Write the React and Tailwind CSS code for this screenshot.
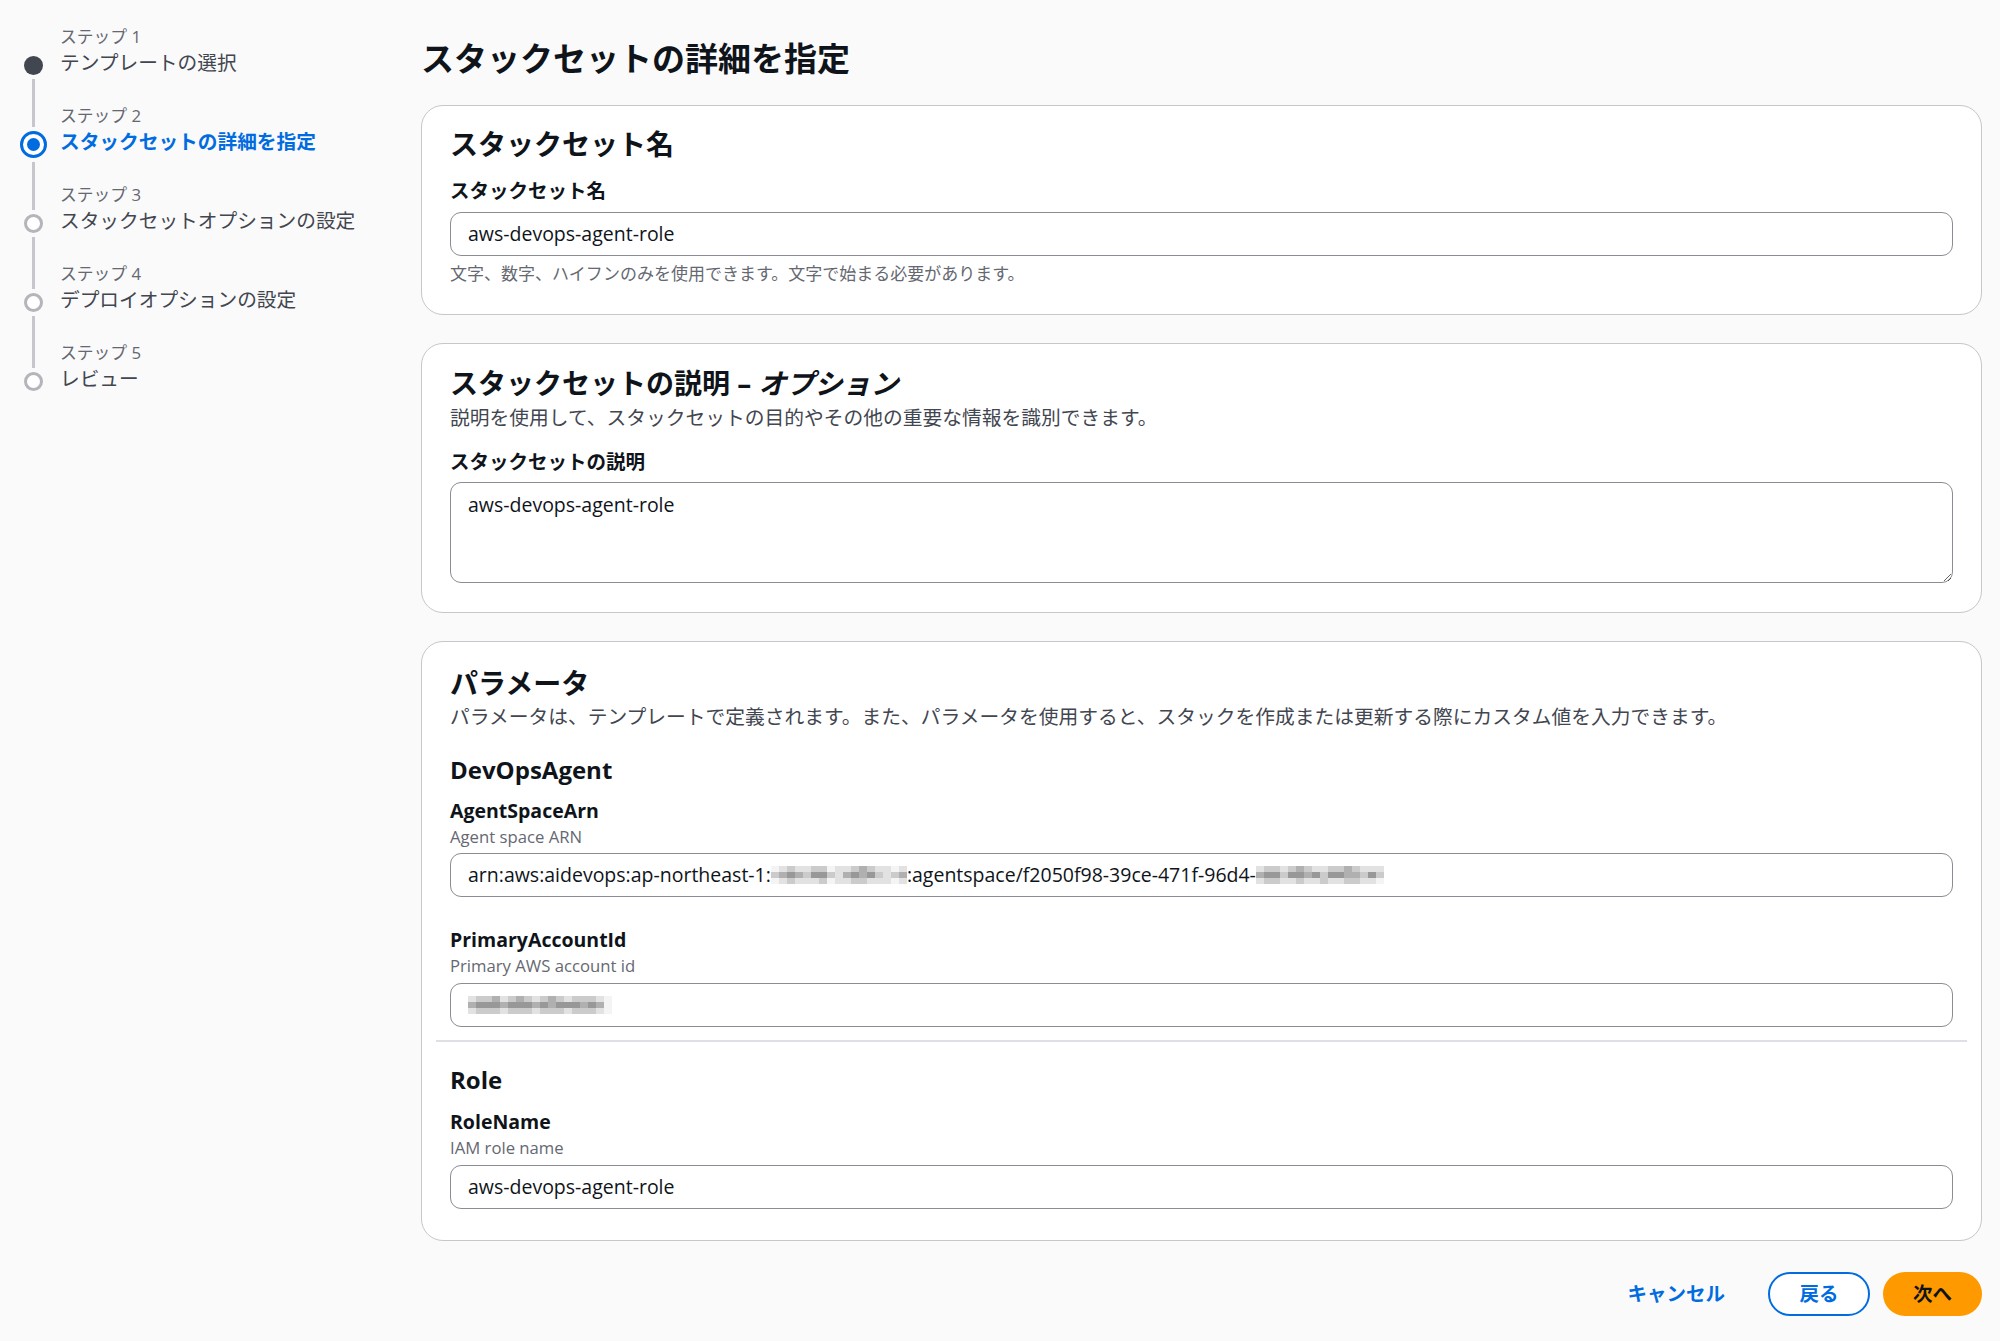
import React from "react";

const steps = [
  { label: "ステップ 1", title: "テンプレートの選択", state: "done" },
  { label: "ステップ 2", title: "スタックセットの詳細を指定", state: "active" },
  { label: "ステップ 3", title: "スタックセットオプションの設定", state: "todo" },
  { label: "ステップ 4", title: "デプロイオプションの設定", state: "todo" },
  { label: "ステップ 5", title: "レビュー", state: "todo" },
];

const shades = [
  "bg-[#f4f4f4]",
  "bg-[#e2e2e2]",
  "bg-[#cbcbcb]",
  "bg-[#b0b0b0]",
  "bg-[#989898]",
];

// pixelated blur blocks used where the original hides account ids
function Redacted({ rows }) {
  return (
    <span className="inline-flex flex-col align-middle">
      {rows.map((row, i) => (
        <span key={i} className="flex">
          {row.split("").map((c, j) => (
            <span key={j} className={`w-[8px] h-[6px] ${shades[Number(c)]}`} />
          ))}
        </span>
      ))}
    </span>
  );
}

function Step({ step, first, last }) {
  const active = step.state === "active";
  return (
    <li className="flex gap-[17px]">
      <div className="w-[20px] flex flex-col items-center">
        <div className={`${active ? "h-[27px]" : "h-[31px]"} w-[3px] pb-[4px]`}>
          {!first && <div className="h-full w-full bg-[#c6c6cd]" />}
        </div>
        {step.state === "done" && <div className="w-[19px] h-[19px] shrink-0 rounded-full bg-[#424650]" />}
        {step.state === "todo" && (
          <div className="w-[19px] h-[19px] shrink-0 rounded-full border-[3px] border-[#b4b4bb] bg-white" />
        )}
        {active && (
          <div className="w-[27px] h-[27px] shrink-0 rounded-full border-[3px] border-[#006ce0] bg-white flex items-center justify-center">
            <div className="w-[13px] h-[13px] rounded-full bg-[#006ce0]" />
          </div>
        )}
        <div className="flex-1 w-[3px] pt-[4px]">
          {!last && <div className="h-full w-full bg-[#c6c6cd]" />}
        </div>
      </div>
      <div className="pb-[27px]">
        <div className="text-[16.8px] leading-[24px] text-[#656871]">{step.label}</div>
        <div
          className={`text-[19.7px] leading-[28px] ${
            active ? "font-bold text-[#006ce0]" : "text-[#424650]"
          }`}
        >
          {step.title}
        </div>
      </div>
    </li>
  );
}

function Field({ label, desc, children }) {
  return (
    <div>
      <div className="text-[19.5px] leading-[28px] font-bold">{label}</div>
      {desc && <div className="text-[16.7px] leading-[24px] text-[#656871]">{desc}</div>}
      {children}
    </div>
  );
}

function InputBox({ children, className = "" }) {
  return (
    <div
      className={`h-[44px] rounded-[11px] border border-[#8c8c94] bg-white px-[17px] flex items-center text-[19.5px] text-[#0f141a] whitespace-nowrap ${className}`}
    >
      {children}
    </div>
  );
}

function Card({ children, className = "" }) {
  return (
    <section className={`rounded-[22px] border border-[#c6c6cd] bg-white px-[28px] ${className}`}>
      {children}
    </section>
  );
}

export default function App() {
  return (
    <div className="min-h-screen bg-[#fafafa] flex [font-family:'Open_Sans','Noto_Sans_CJK_JP',sans-serif] text-[#0f141a]">
      <nav className="w-[421px] shrink-0 pl-[23px] pt-[25px]">
        <ol>
          {steps.map((s, i) => (
            <Step key={s.label} step={s} first={i === 0} last={i === steps.length - 1} />
          ))}
        </ol>
      </nav>

      <main className="flex-1 pr-[18px] pt-[39px] pb-[26px]">
        <h1 className="text-[33px] leading-[40px] font-bold mb-[26px]">スタックセットの詳細を指定</h1>

        <Card className="pt-[20px] pb-[29px]">
          <h2 className="text-[28px] leading-[36px] font-bold">スタックセット名</h2>
          <div className="mt-[15px]">
            <Field label="スタックセット名">
              <InputBox className="mt-[7px]">aws-devops-agent-role</InputBox>
            </Field>
            <div className="mt-[7px] text-[17px] leading-[22px] text-[#656871]">
              文字、数字、ハイフンのみを使用できます。文字で始まる必要があります。
            </div>
          </div>
        </Card>

        <Card className="mt-[28px] pt-[21px] pb-[29px]">
          <h2 className="text-[28px] leading-[36px] font-bold">
            スタックセットの説明 – <i>オプション</i>
          </h2>
          <p className="mt-[4px] text-[19.75px] leading-[26px] text-[#424650]">
            説明を使用して、スタックセットの目的やその他の重要な情報を識別できます。
          </p>
          <div className="mt-[17px]">
            <Field label="スタックセットの説明">
              <textarea
                readOnly
                defaultValue="aws-devops-agent-role"
                className="mt-[6px] block w-full h-[101px] rounded-[11px] border border-[#8c8c94] bg-white px-[17px] py-[9px] text-[19.5px] leading-[26px] text-[#0f141a] outline-none"
              />
            </Field>
          </div>
        </Card>

        <Card className="mt-[28px] pt-[23px] pb-[31px]">
          <h2 className="text-[28px] leading-[36px] font-bold">パラメータ</h2>
          <p className="mt-[3px] text-[19.75px] leading-[26px] text-[#424650]">
            パラメータは、テンプレートで定義されます。また、パラメータを使用すると、スタックを作成または更新する際にカスタム値を入力できます。
          </p>

          <h3 className="mt-[24px] text-[24px] leading-[32px] font-bold">DevOpsAgent</h3>
          <div className="mt-[11px]">
            <Field label="AgentSpaceArn" desc="Agent space ARN">
              <InputBox className="mt-[4px]">
                <span>arn:aws:aidevops:ap-northeast-1:</span>
                <Redacted
                  rows={["01211220112321101", "23432442134342123", "01211120112211101"]}
                />
                <span>:agentspace/f2050f98-39ce-471f-96d4-</span>
                <Redacted rows={["1221232112232111", "3442443424433242", "1221121121122110"]} />
              </InputBox>
            </Field>
          </div>
          <div className="mt-[29px]">
            <Field label="PrimaryAccountId" desc="Primary AWS account id">
              <InputBox className="mt-[5px]">
                <Redacted rows={["122312321232122210", "344434443434443430", "122212221222122210"]} />
              </InputBox>
            </Field>
          </div>

          <hr className="mt-[13px] -mx-[14px] border-0 h-[2px] bg-[#e0e0e4]" />

          <h3 className="mt-[22px] text-[24px] leading-[32px] font-bold">Role</h3>
          <div className="mt-[12px]">
            <Field label="RoleName" desc="IAM role name">
              <InputBox className="mt-[5px]">aws-devops-agent-role</InputBox>
            </Field>
          </div>
        </Card>

        <div className="mt-[31px] flex justify-end items-center gap-[13px]">
          <button className="mr-[30px] text-[19.5px] font-bold text-[#006ce0]">キャンセル</button>
          <button className="w-[102px] h-[44px] rounded-full border-2 border-[#006ce0] bg-white text-[19.5px] font-bold text-[#006ce0]">
            戻る
          </button>
          <button className="w-[99px] h-[44px] rounded-full bg-[#ff9900] text-[19.5px] font-bold text-[#0f141a]">
            次へ
          </button>
        </div>
      </main>
    </div>
  );
}
